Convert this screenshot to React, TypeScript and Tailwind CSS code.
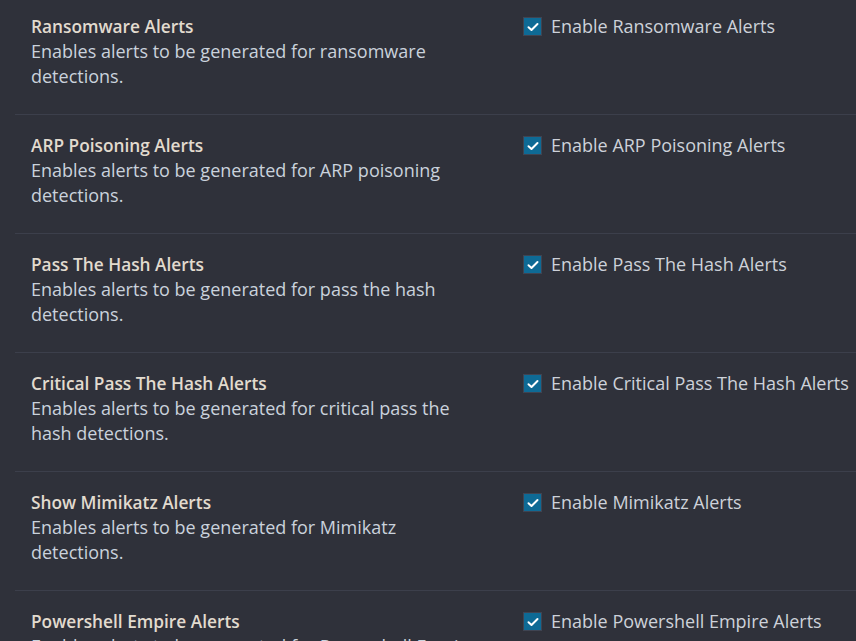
import React from "react";

const rows = [
  { title: "Ransomware Alerts", desc: "Enables alerts to be generated for ransomware detections.", label: "Enable Ransomware Alerts" },
  { title: "ARP Poisoning Alerts", desc: "Enables alerts to be generated for ARP poisoning detections.", label: "Enable ARP Poisoning Alerts" },
  { title: "Pass The Hash Alerts", desc: "Enables alerts to be generated for pass the hash detections.", label: "Enable Pass The Hash Alerts" },
  { title: "Critical Pass The Hash Alerts", desc: "Enables alerts to be generated for critical pass the hash detections.", label: "Enable Critical Pass The Hash Alerts" },
  { title: "Show Mimikatz Alerts", desc: "Enables alerts to be generated for Mimikatz detections.", label: "Enable Mimikatz Alerts" },
  { title: "Powershell Empire Alerts", desc: "Enables alerts to be generated for Powershell Empire detections.", label: "Enable Powershell Empire Alerts" },
];

function Check() {
  return (
    <span className="flex h-[19px] w-[19px] shrink-0 items-center justify-center border border-[#3f4452] bg-[#0e6a95]">
      <svg width="12" height="10" viewBox="0 0 12 10" fill="none">
        <path d="M1.5 5.2 L4.5 8 L10.5 2" stroke="#ffffff" strokeWidth="2" strokeLinecap="round" strokeLinejoin="round" />
      </svg>
    </span>
  );
}

export default function App() {
  return (
    <div
      className="h-[641px] w-[856px] overflow-hidden bg-[#2f313a]"
      style={{ fontFamily: '"Open Sans", "Noto Sans", sans-serif' }}
    >
      <div className="-mt-[4px] pl-[15px]">
        {rows.map((r) => (
          <div key={r.title} className="flex border-b border-[#3c3f4b] pb-[25px] pt-[18px]">
            <div className="w-[493px] shrink-0 pl-[16px] pr-[22px]">
              <div className="text-[17.3px] font-semibold leading-[25px] text-[#e2dbcf]">{r.title}</div>
              <div className="text-[18px] leading-[25px] text-[#cad2dc]">{r.desc}</div>
            </div>
            <label className="flex h-[25px] items-center gap-[9px] whitespace-nowrap pl-[15px]">
              <Check />
              <span className="text-[18px] leading-[25px] text-[#cdd1d9]">{r.label}</span>
            </label>
          </div>
        ))}
      </div>
    </div>
  );
}
